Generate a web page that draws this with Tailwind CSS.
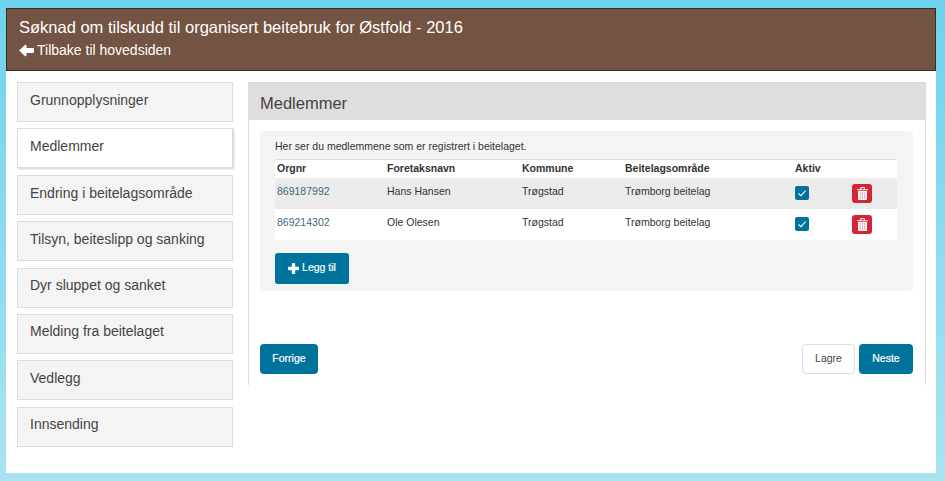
<!DOCTYPE html>
<html lang="en">
<head>
    <meta charset="UTF-8">
    <meta name="viewport" content="width=device-width, initial-scale=1.0">
    <title>Medlemmer</title>
    <script src="https://cdn.jsdelivr.net/npm/@tailwindcss/browser@4"></script>
</head>
<body class="h-[481px] overflow-hidden bg-linear-to-b from-[#6dd2ec] to-[#a9e3f2] pt-2 pr-[9px] pb-2 pl-[6px] font-['Liberation_Sans',Arial,sans-serif] text-[#333]">
    <div class="h-[465px] bg-white">
        <!-- top banner -->
        <header class="h-[63px] border border-[#3b2a20] bg-[#735342] pl-3 pt-[8px] text-white">
            <h1 class="text-[16.5px] leading-[20px]">Søknad om tilskudd til organisert beitebruk for Østfold - 2016</h1>
            <a href="#" class="mt-[3px] flex items-center text-[14px] leading-[20px]">
                <svg class="mr-[3px] h-[13px] w-[15px]" viewBox="0 0 15 13" fill="#fff"><path d="M0 6.5 6.5 0.5 L7.5 1.5 V4 H14 Q15 4 15 5 V8 Q15 9 14 9 H7.5 V11.5 L6.5 12.5Z"/></svg>
                Tilbake til hovedsiden
            </a>
        </header>

        <div class="flex pl-[11px] pt-[11px]">
            <!-- side menu -->
            <nav class="flex w-[216px] flex-col gap-[6.4px] text-[14px] text-[#444]">
                <a href="#" class="h-10 border border-[#dcdcdc] bg-[#f4f4f4] pl-[12px] pt-[7px] leading-[20px]">Grunnopplysninger</a>
                <a href="#" class="h-10 border border-[#dcdcdc] bg-white pl-[12px] pt-[7px] leading-[20px] shadow-[1px_1px_2px_rgba(0,0,0,0.2)]">Medlemmer</a>
                <a href="#" class="h-10 border border-[#dcdcdc] bg-[#f4f4f4] pl-[12px] pt-[7px] leading-[20px]">Endring i beitelagsområde</a>
                <a href="#" class="h-10 border border-[#dcdcdc] bg-[#f4f4f4] pl-[12px] pt-[7px] leading-[20px]">Tilsyn, beiteslipp og sanking</a>
                <a href="#" class="h-10 border border-[#dcdcdc] bg-[#f4f4f4] pl-[12px] pt-[6px] leading-[20px]">Dyr sluppet og sanket</a>
                <a href="#" class="h-10 border border-[#dcdcdc] bg-[#f4f4f4] pl-[12px] pt-[6px] leading-[20px]">Melding fra beitelaget</a>
                <a href="#" class="h-10 border border-[#dcdcdc] bg-[#f4f4f4] pl-[12px] pt-[7px] leading-[20px]">Vedlegg</a>
                <a href="#" class="h-10 border border-[#dcdcdc] bg-[#f4f4f4] pl-[12px] pt-[6px] leading-[20px]">Innsending</a>
            </nav>

            <!-- main panel -->
            <main class="ml-[15px] h-[303px] w-[678px] border-x border-[#dcdcd8]">
                <h2 class="h-[38px] border-t border-[#d8d8d8] bg-[#dedede] pl-[11px] pt-[9px] text-[16.5px] leading-[22px] text-[#444]">Medlemmer</h2>

                <section class="ml-[11px] mr-[11px] mt-[11px] h-[160px] w-[653px] rounded bg-[#f4f4f4] px-[15px] pt-[9px]">
                    <p class="text-[10.5px] leading-[12px]">Her ser du medlemmene som er registrert i beitelaget.</p>
                    <table class="mt-[7px] w-[622px] table-fixed border-t border-[#dedede] bg-white text-[10.5px]">
                        <thead>
                            <tr class="h-[18px] text-left font-bold">
                                <th class="w-[112px] pl-[2px]">Orgnr</th>
                                <th class="w-[135px]">Foretaksnavn</th>
                                <th class="w-[103px]">Kommune</th>
                                <th class="w-[170px]">Beitelagsområde</th>
                                <th>Aktiv</th>
                            </tr>
                        </thead>
                        <tbody>
                            <tr class="h-[31px] bg-[#ebebeb]">
                                <td class="pb-[3px] pl-[2px] text-[#3e6a7a]">869187992</td>
                                <td class="pb-[3px]">Hans Hansen</td>
                                <td class="pb-[3px]">Trøgstad</td>
                                <td class="pb-[3px]">Trømborg beitelag</td>
                                <td>
                                    <div class="flex items-center">
                                        <span class="flex h-[14px] w-[14px] items-center justify-center rounded-[2px] bg-[#00739d]">
                                            <svg class="h-[10px] w-[10px]" viewBox="0 0 10 10" fill="none" stroke="#fff" stroke-width="1.1"><path d="M1.5 5.5 4 7.7 8.7 2.5"/></svg>
                                        </span>
                                        <span class="ml-[43px] flex h-[19px] w-[20px] items-center justify-center rounded-[3px] bg-[#d42535]">
                                            <svg class="h-[13px] w-[11px]" viewBox="0 0 11 13"><path fill="#fff" d="M0 2.2H3.2V1Q3.2 0 4.2 0H6.8Q7.8 0 7.8 1V2.2H11V3.2H0ZM4.2 2.2H6.8V1H4.2ZM1 4H10V12Q10 13 9 13H2Q1 13 1 12Z"/><path fill="#eeb4c0" d="M2.6 5H3.8V12H2.6ZM4.9 5H6.1V12H4.9ZM7.2 5H8.4V12H7.2Z"/></svg>
                                        </span>
                                    </div>
                                </td>
                            </tr>
                            <tr class="h-[31px]">
                                <td class="pb-[3px] pl-[2px] text-[#3e6a7a]">869214302</td>
                                <td class="pb-[3px]">Ole Olesen</td>
                                <td class="pb-[3px]">Trøgstad</td>
                                <td class="pb-[3px]">Trømborg beitelag</td>
                                <td>
                                    <div class="flex items-center">
                                        <span class="flex h-[14px] w-[14px] items-center justify-center rounded-[2px] bg-[#00739d]">
                                            <svg class="h-[10px] w-[10px]" viewBox="0 0 10 10" fill="none" stroke="#fff" stroke-width="1.1"><path d="M1.5 5.5 4 7.7 8.7 2.5"/></svg>
                                        </span>
                                        <span class="ml-[43px] flex h-[19px] w-[20px] items-center justify-center rounded-[3px] bg-[#d42535]">
                                            <svg class="h-[13px] w-[11px]" viewBox="0 0 11 13"><path fill="#fff" d="M0 2.2H3.2V1Q3.2 0 4.2 0H6.8Q7.8 0 7.8 1V2.2H11V3.2H0ZM4.2 2.2H6.8V1H4.2ZM1 4H10V12Q10 13 9 13H2Q1 13 1 12Z"/><path fill="#eeb4c0" d="M2.6 5H3.8V12H2.6ZM4.9 5H6.1V12H4.9ZM7.2 5H8.4V12H7.2Z"/></svg>
                                        </span>
                                    </div>
                                </td>
                            </tr>
                        </tbody>
                    </table>
                    <button class="mt-[13px] flex h-[31px] w-[74px] items-center justify-center rounded-[3px] bg-[#00739d] text-[10.5px] text-white [-webkit-text-stroke:0.2px_white]">
                        <svg class="mr-[3px] h-[11px] w-[11px]" viewBox="0 0 10 10" fill="#fff"><path d="M3.5 0.5Q3.5 0 4 0H6Q6.5 0 6.5 0.5V3.5H9.5Q10 3.5 10 4V6Q10 6.5 9.5 6.5H6.5V9.5Q6.5 10 6 10H4Q3.5 10 3.5 9.5V6.5H0.5Q0 6.5 0 6V4Q0 3.5 0.5 3.5H3.5Z"/></svg>
                        Legg til
                    </button>
                </section>

                <div class="ml-[11px] mt-[53px] flex w-[653px] items-center text-[10.5px]">
                    <button class="h-[30px] w-[58px] rounded-[4px] bg-[#00739d] text-white [-webkit-text-stroke:0.2px_white]">Forrige</button>
                    <button class="ml-auto h-[30px] w-[53px] rounded-[4px] border border-[#dcdcdc] bg-white text-[#444]">Lagre</button>
                    <button class="ml-[4px] h-[30px] w-[54px] rounded-[4px] bg-[#00739d] text-white [-webkit-text-stroke:0.2px_white]">Neste</button>
                </div>
            </main>
        </div>
    </div>
</body>
</html>
